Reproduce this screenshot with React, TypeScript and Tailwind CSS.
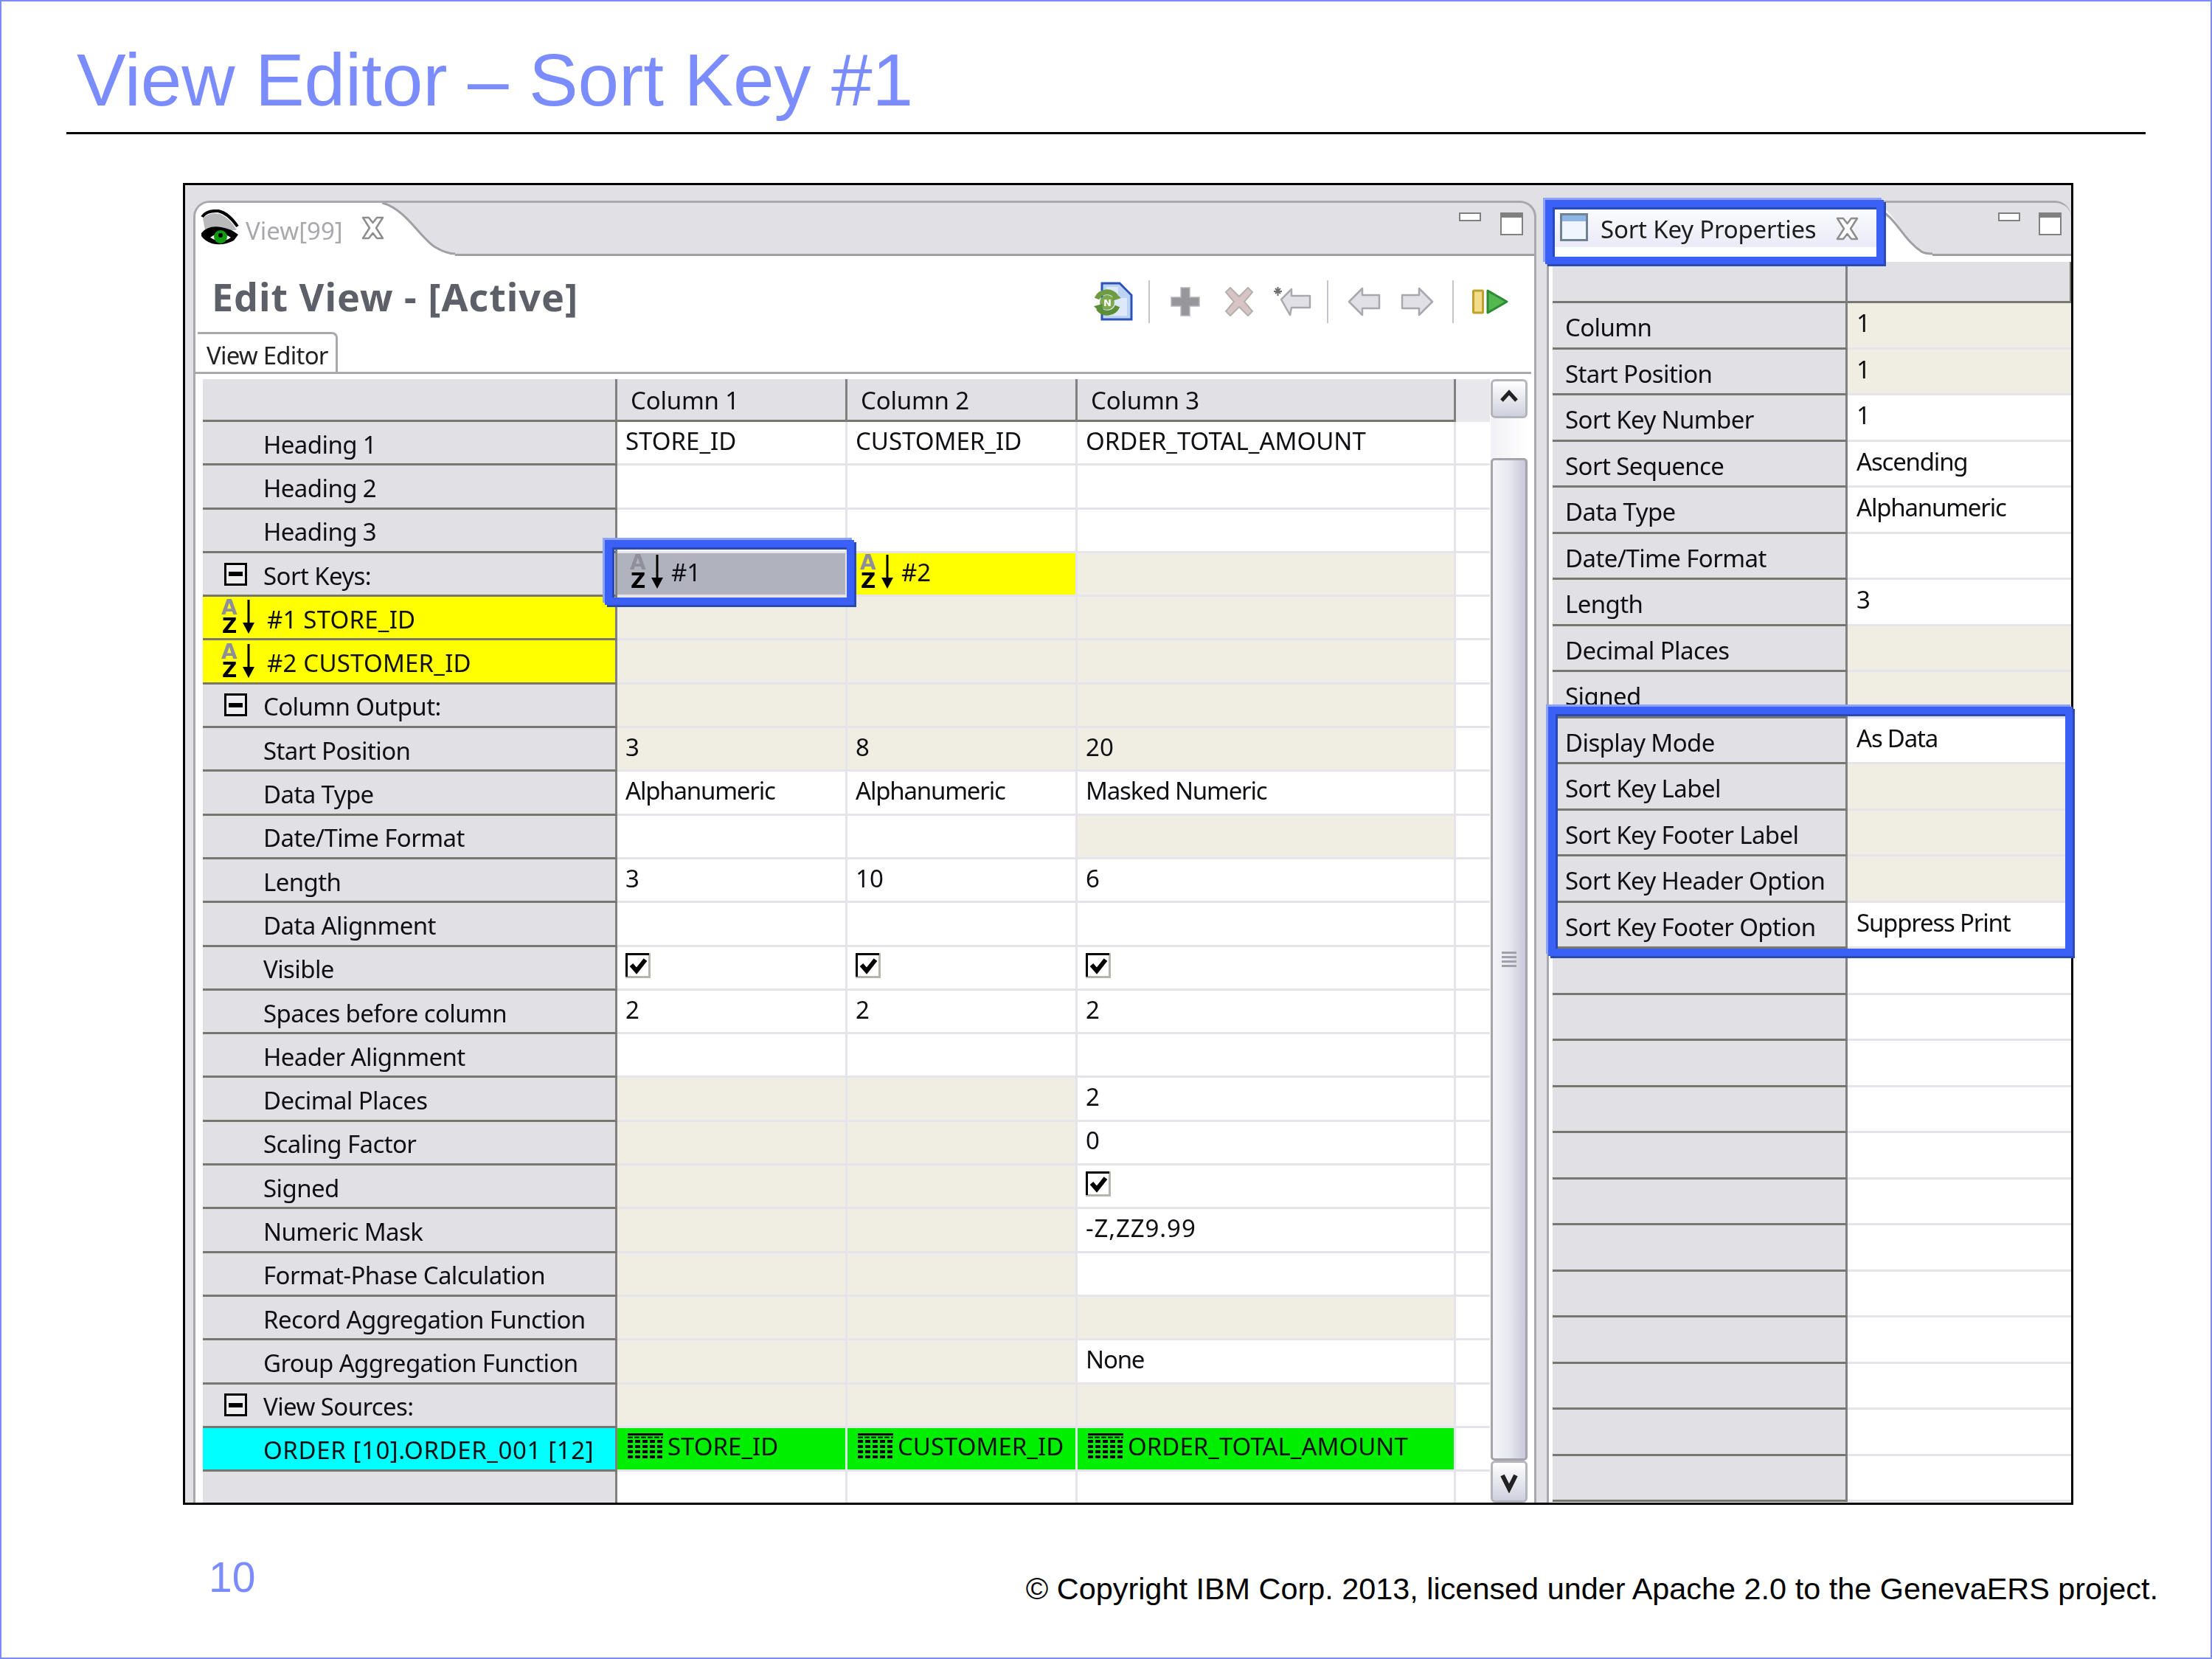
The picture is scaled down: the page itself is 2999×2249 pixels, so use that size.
import { ReactNode } from "react";

type CellKind = "white" | "beige" | "yellow" | "selected" | "green";

interface CellData {
  kind: CellKind;
  text?: string;
  check?: boolean;
  sortIcon?: boolean;
  tableIcon?: boolean;
}

interface RowData {
  label: string;
  labelKind?: "plain" | "toggle" | "yellow" | "cyan";
  cells: CellData[];
}

const w = (text?: string): CellData => ({ kind: "white", text });
const b = (text?: string): CellData => ({ kind: "beige", text });
const chk = (): CellData => ({ kind: "white", check: true });
const grn = (text: string): CellData => ({ kind: "green", text, tableIcon: true });

const LEFT_ROWS: RowData[] = [
  { label: "Heading 1", cells: [w("STORE_ID"), w("CUSTOMER_ID"), w("ORDER_TOTAL_AMOUNT")] },
  { label: "Heading 2", cells: [w(), w(), w()] },
  { label: "Heading 3", cells: [w(), w(), w()] },
  {
    label: "Sort Keys:",
    labelKind: "toggle",
    cells: [
      { kind: "selected", text: "#1", sortIcon: true },
      { kind: "yellow", text: "#2", sortIcon: true },
      b(),
    ],
  },
  { label: "#1 STORE_ID", labelKind: "yellow", cells: [b(), b(), b()] },
  { label: "#2 CUSTOMER_ID", labelKind: "yellow", cells: [b(), b(), b()] },
  { label: "Column Output:", labelKind: "toggle", cells: [b(), b(), b()] },
  { label: "Start Position", cells: [b("3"), b("8"), b("20")] },
  { label: "Data Type", cells: [w("Alphanumeric"), w("Alphanumeric"), w("Masked Numeric")] },
  { label: "Date/Time Format", cells: [w(), w(), b()] },
  { label: "Length", cells: [w("3"), w("10"), w("6")] },
  { label: "Data Alignment", cells: [w(), w(), w()] },
  { label: "Visible", cells: [chk(), chk(), chk()] },
  { label: "Spaces before column", cells: [w("2"), w("2"), w("2")] },
  { label: "Header Alignment", cells: [w(), w(), w()] },
  { label: "Decimal Places", cells: [b(), b(), w("2")] },
  { label: "Scaling Factor", cells: [b(), b(), w("0")] },
  { label: "Signed", cells: [b(), b(), chk()] },
  { label: "Numeric Mask", cells: [b(), b(), w("-Z,ZZ9.99")] },
  { label: "Format-Phase Calculation", cells: [b(), b(), w()] },
  { label: "Record Aggregation Function", cells: [b(), b(), b()] },
  { label: "Group Aggregation Function", cells: [b(), b(), w("None")] },
  { label: "View Sources:", labelKind: "toggle", cells: [b(), b(), b()] },
  {
    label: "ORDER [10].ORDER_001 [12]",
    labelKind: "cyan",
    cells: [grn("STORE_ID"), grn("CUSTOMER_ID"), grn("ORDER_TOTAL_AMOUNT")],
  },
  { label: "", cells: [w(), w(), w()] },
];

const RIGHT_ROWS: [string, string, boolean][] = [
  ["Column", "1", true],
  ["Start Position", "1", true],
  ["Sort Key Number", "1", false],
  ["Sort Sequence", "Ascending", false],
  ["Data Type", "Alphanumeric", false],
  ["Date/Time Format", "", false],
  ["Length", "3", false],
  ["Decimal Places", "", true],
  ["Signed", "", true],
  ["Display Mode", "As Data", false],
  ["Sort Key Label", "", true],
  ["Sort Key Footer Label", "", true],
  ["Sort Key Header Option", "", true],
  ["Sort Key Footer Option", "Suppress Print", false],
  ["", "", false],
  ["", "", false],
  ["", "", false],
  ["", "", false],
  ["", "", false],
  ["", "", false],
  ["", "", false],
  ["", "", false],
  ["", "", false],
  ["", "", false],
  ["", "", false],
  ["", "", false],
];

const CELL_BG: Record<CellKind, string> = {
  white: "bg-white",
  beige: "bg-[#f0eee2]",
  yellow: "bg-[#ffff00]",
  selected: "bg-[#b0b2bd]",
  green: "bg-[#00ef00]",
};

// Tahoma runs narrower than Noto Sans in lower case and wider in digits
function valueTracking(text?: string) {
  if (!text) return "";
  if (text.includes(",")) return "tracking-[0.9px]";
  return /[a-z]/.test(text) ? "tracking-[-1.2px]" : "";
}

function SortIcon() {
  return (
    <svg width="46" height="48" viewBox="0 0 46 48" className="shrink-0 overflow-visible">
      <text x="0" y="21" fontFamily="DejaVu Sans" fontWeight="700" fontSize="28" fill="#8f8f9c">A</text>
      <text x="1" y="46" fontFamily="DejaVu Sans" fontWeight="700" fontSize="28" fill="#000">Z</text>
      <path d="M37 1V36" stroke="#000" strokeWidth="3" />
      <path d="M29 32H45L37 47Z" fill="#000" />
    </svg>
  );
}

function TableIcon() {
  const rows = [9, 16, 23, 30];
  const cols = [0, 10, 20, 30, 40];
  return (
    <svg width="48" height="35" viewBox="0 0 48 35" className="shrink-0">
      <path d="M0 1.5H48" stroke="#000" strokeWidth="3" />
      <path d="M0 5.5H48" stroke="#000" strokeWidth="2" strokeDasharray="7 2" />
      {rows.map((y) =>
        cols.map((x) => <rect key={`${x}-${y}`} x={x} y={y} width="7" height="4" fill="#000" />)
      )}
    </svg>
  );
}

function CheckBox() {
  return (
    <svg width="34" height="34" viewBox="0 0 34 34">
      <rect x="1.5" y="1.5" width="31" height="31" fill="#fff" stroke="#b4b4ac" strokeWidth="3" />
      <path d="M1.5 32V1.5H32" fill="none" stroke="#000" strokeWidth="3" />
      <path d="M8 16L15 24L27 9" fill="none" stroke="#000" strokeWidth="6" />
    </svg>
  );
}

function Toggle() {
  return (
    <span className="flex h-[31px] w-[31px] shrink-0 items-center justify-center border-[3px] border-black bg-[#eeeef0]">
      <span className="h-[6px] w-[19px] bg-black" />
    </span>
  );
}

function CloseIcon() {
  return (
    <svg width="33" height="32" viewBox="0 0 33 32" className="shrink-0">
      <path
        d="M3 2H11L16.5 9L22 2H30L21 16L30 30H22L16.5 23L11 30H3L12 16Z"
        fill="#fff"
        stroke="#8d8d8d"
        strokeWidth="2.5"
        strokeLinejoin="round"
      />
    </svg>
  );
}

function MinMax({ gap }: { gap: string }) {
  return (
    <div className={`flex items-start ${gap}`}>
      <span className="h-[12px] w-[30px] border-[2.5px] border-[#808080] bg-white" />
      <span className="h-[31px] w-[31px] border-[2.5px] border-t-[7px] border-[#808080] bg-white" />
    </div>
  );
}

function EyeIcon() {
  return (
    <svg width="52" height="50" viewBox="0 0 52 50" className="shrink-0">
      <path d="M3 12Q12 3 26 6Q40 12 49 28L6 28Z" fill="#b9b9bb" />
      <path d="M2 10Q8 1 24 2Q38 5 50 23" fill="none" stroke="#000" strokeWidth="4" />
      <path d="M1 32Q10 21 28 24Q41 26 51 34L45 42Q30 50 15 46Q5 42 1 36Z" fill="#000" />
      <path d="M13 38Q26 28 41 38Q28 47 13 38Z" fill="#fff" />
      <circle cx="27" cy="37" r="9" fill="#129a12" />
      <circle cx="27" cy="35" r="3" fill="#000" />
    </svg>
  );
}

function DocIcon() {
  return (
    <svg width="54" height="53" viewBox="0 0 54 53" className="shrink-0">
      <path d="M12 2H36L52 18V51H12Z" fill="#bcd3f2" stroke="#2b52b8" strokeWidth="3" />
      <path d="M18 7H34V22H46V46H18Z" fill="#dde9f9" />
      <circle cx="19" cy="28" r="10" fill="#7fa94f" />
      <path d="M5 23A15 15 0 0 1 31 20" fill="none" stroke="#6f9c3f" strokeWidth="7" />
      <path d="M33 33A15 15 0 0 1 7 36" fill="none" stroke="#5b8f35" strokeWidth="7" />
      <path d="M27 13L38 22L26 26Z" fill="#6f9c3f" />
      <path d="M12 44L1 33L13 30Z" fill="#5b8f35" />
      <text x="14" y="33" fontFamily="DejaVu Sans" fontWeight="700" fontSize="13" fill="#fff">N</text>
    </svg>
  );
}

function Separator({ ml }: { ml: string }) {
  return <span className={`h-[58px] w-[2px] shrink-0 bg-[#c4c4cc] ${ml}`} />;
}

function Toolbar() {
  return (
    <div className="mt-[20px] flex items-center">
      <DocIcon />
      <Separator ml="ml-[21px]" />
      <svg width="40" height="40" viewBox="0 0 40 40" className="ml-[28px] shrink-0">
        <path d="M14 1H26V14H39V26H26V39H14V26H1V14H14Z" fill="#97979b" stroke="#b8b8bc" strokeWidth="1.5" />
      </svg>
      <svg width="40" height="40" viewBox="0 0 40 40" className="ml-[33px] shrink-0">
        <path d="M2 7L8 1L20 13L32 1L38 7L27 20L38 33L32 39L20 27L8 39L2 33L13 20Z" fill="#d9c4c4" stroke="#b4b0b0" strokeWidth="2" />
      </svg>
      <svg width="53" height="40" viewBox="0 0 53 40" className="ml-[25px] shrink-0">
        <path d="M4 2L11 9M11 2L4 9M2 6H13M7.5 0V12" stroke="#6e6e72" strokeWidth="2" />
        <path d="M12 17L26 3V12H51V28H26L24 38Z" fill="#e0e0e6" stroke="#a8a8ae" strokeWidth="2.5" strokeLinejoin="round" />
      </svg>
      <Separator ml="ml-[21px]" />
      <svg width="45" height="40" viewBox="0 0 45 40" className="ml-[26px] shrink-0">
        <path d="M2 20L20 2V11H43V29H20V38Z" fill="#e0e0e6" stroke="#a8a8ae" strokeWidth="2.5" strokeLinejoin="round" />
      </svg>
      <svg width="45" height="40" viewBox="0 0 45 40" className="ml-[27px] shrink-0">
        <path d="M43 20L25 2V11H2V29H25V38Z" fill="#e0e0e6" stroke="#a8a8ae" strokeWidth="2.5" strokeLinejoin="round" />
      </svg>
      <Separator ml="ml-[25px]" />
      <svg width="49" height="34" viewBox="0 0 49 34" className="ml-[25px] shrink-0">
        <rect x="1.5" y="2" width="13" height="30" rx="1" fill="#f2dc8a" stroke="#bfa12f" strokeWidth="3" />
        <path d="M21 2L47 17L21 32Z" fill="#52b84f" stroke="#2e8a35" strokeWidth="3" strokeLinejoin="round" />
      </svg>
    </div>
  );
}

function GridCell({ cell, last }: { cell: CellData; last?: boolean }) {
  return (
    <div
      className={`flex items-center gap-[6px] overflow-hidden border-b-[3px] border-[#e4e4ea] pb-[6px] whitespace-nowrap ${CELL_BG[cell.kind]} ${last ? "" : "border-r-[3px]"} ${cell.sortIcon ? "pl-[17px] gap-[10px]" : cell.tableIcon ? "pl-[14px]" : "pl-[11px]"} ${valueTracking(cell.text)}`}
    >
      {cell.sortIcon && <SortIcon />}
      {cell.tableIcon && <TableIcon />}
      {cell.check && <CheckBox />}
      {cell.text}
    </div>
  );
}

function LabelCell({ row }: { row: RowData }) {
  const kind = row.labelKind ?? "plain";
  const bg = kind === "yellow" ? "bg-[#ffff00]" : kind === "cyan" ? "bg-[#00ffff]" : "bg-[#e0e0e5]";
  const tracking = kind === "yellow" ? "tracking-[0.2px]" : kind === "cyan" ? "tracking-[0.6px]" : "tracking-[-0.6px]";
  let inner: ReactNode = <span className="pl-[82px]">{row.label}</span>;
  if (kind === "toggle") {
    inner = (
      <>
        <span className="ml-[29px] mr-[22px] -mt-[4px]">
          <Toggle />
        </span>
        {row.label}
      </>
    );
  }
  if (kind === "yellow") {
    inner = (
      <>
        <span className="ml-[25px] mr-[16px] -mt-[6px]">
          <SortIcon />
        </span>
        {row.label}
      </>
    );
  }
  return (
    <div className={`flex items-center overflow-hidden border-b-[3px] border-r-[3px] border-b-[#77776f] border-r-[#808080] pt-[4px] whitespace-nowrap ${bg} ${tracking}`}>
      {inner}
    </div>
  );
}

function ColumnHeader({ text }: { text: string }) {
  return (
    <div className="flex items-center border-b-[3px] border-r-[3px] border-b-[#77776f] border-r-[#808080] bg-[#e0e0e5] pl-[18px] pt-[2px] tracking-[-0.2px]">
      {text}
    </div>
  );
}

function EditorGrid() {
  return (
    <div className="flex-1 overflow-hidden">
      <div className="grid h-[58px] grid-cols-[562px_312px_312px_513px_46px]">
        <ColumnHeader text="" />
        <ColumnHeader text="Column 1" />
        <ColumnHeader text="Column 2" />
        <ColumnHeader text="Column 3" />
        <div className="bg-[#e8e8ec]" />
      </div>
      {LEFT_ROWS.map((row, i) => (
        <div key={i} className="grid h-[59.3px] grid-cols-[562px_312px_312px_513px_46px] bg-white">
          <LabelCell row={row} />
          {row.cells.map((cell, j) => (
            <GridCell key={j} cell={cell} />
          ))}
          <GridCell cell={{ kind: "white" }} last />
        </div>
      ))}
    </div>
  );
}

function ScrollBar() {
  return (
    <div className="ml-[1px] flex w-[50px] flex-col">
      <div className="flex h-[53px] items-center justify-center rounded-[6px] border-[3px] border-[#b4b4bc] bg-gradient-to-b from-white to-[#cfd0de] pb-[8px]">
        <svg width="26" height="18" viewBox="0 0 26 18">
          <path d="M3 15L13 4L23 15" fill="none" stroke="#222" strokeWidth="5" />
        </svg>
      </div>
      <div className="h-[54px] bg-gradient-to-r from-[#f1f1f6] to-white" />
      <div className="flex flex-1 items-center justify-center rounded-[5px] border-[3px] border-[#a4a4aa] bg-gradient-to-r from-[#f4f4f9] via-[#e8e8f0] to-[#c8c8da]">
        <div className="flex w-[20px] flex-col gap-[3px]">
          <span className="h-[3px] bg-[#a0a0a8]" />
          <span className="h-[3px] bg-[#a0a0a8]" />
          <span className="h-[3px] bg-[#a0a0a8]" />
          <span className="h-[3px] bg-[#a0a0a8]" />
        </div>
      </div>
      <div className="flex h-[57px] shrink-0 items-center justify-center rounded-[6px] border-[3px] border-[#b4b4bc] bg-gradient-to-b from-white to-[#cfd0de]">
        <svg width="26" height="30" viewBox="0 0 26 30">
          <path d="M4 6L13 24L22 6" fill="none" stroke="#222" strokeWidth="6" />
        </svg>
      </div>
    </div>
  );
}

function EditorPanel() {
  return (
    <section className="flex h-full w-[1821px] shrink-0 flex-col overflow-hidden rounded-t-[22px] border-x-[3px] border-t-[3px] border-[#a8a8ae]">
      {/* tab strip */}
      <div className="relative h-[72px] shrink-0 border-b-[3px] border-[#a0a0a4]">
        <svg width="352" height="72" viewBox="0 0 352 72" className="absolute left-0 top-0">
          <path d="M0 72V0H253C285 8 305 48 325 60C335 66 345 69 352 69V72Z" fill="#fff" />
          <path d="M253 0C285 8 305 48 325 60C335 66 345 69 352 69" fill="none" stroke="#a0a0a4" strokeWidth="3" />
        </svg>
        <div className="relative flex items-center pl-[7px] pt-[9px]">
          <EyeIcon />
          <span className="ml-[9px] mt-[6px] text-[#a9a9ad]">View[99]</span>
          <span className="ml-[24px]">
            <CloseIcon />
          </span>
        </div>
        <div className="absolute right-[15px] top-[13px]">
          <MinMax gap="gap-[26px]" />
        </div>
      </div>

      <div className="flex min-h-0 flex-1 flex-col bg-white">
        <div className="flex h-[103px] shrink-0 items-center justify-between pl-[22px] pr-[35px]">
          <h2 className="mt-[6px] text-[52px] font-bold tracking-[1px] text-[#5d6069]">Edit View - [Active]</h2>
          <Toolbar />
        </div>
        <div className="mr-[4px] flex h-[57px] shrink-0 items-end border-b-[3px] border-[#a8a8ae] pl-[3px]">
          <div className="flex h-[54px] w-[190px] items-center rounded-tr-[8px] border-r-[3px] border-t-[3px] border-[#a8a8ae] bg-white pl-[12px] pt-[6px] tracking-[-0.8px] text-[#222]">
            View Editor
          </div>
        </div>
        <div className="mt-[7px] flex min-h-0 flex-1 pl-[10px] pr-[9px]">
          <EditorGrid />
          <ScrollBar />
        </div>
      </div>
    </section>
  );
}

function PropertiesPanel() {
  return (
    <section className="ml-[14px] flex h-full min-w-0 flex-1 flex-col overflow-hidden rounded-tr-[22px] border-l-[3px] border-t-[3px] border-[#a8a8ae]">
      <div className="relative h-[72px] shrink-0 border-b-[3px] border-[#a0a0a4]">
        <svg width="520" height="72" viewBox="0 0 520 72" className="absolute left-0 top-0">
          <path d="M0 72V0H445C470 14 480 50 505 66C510 69 515 69 520 69V72Z" fill="#fff" />
          <path d="M445 8C470 18 480 50 505 66C510 69 515 69 520 69" fill="none" stroke="#a0a0a4" strokeWidth="3" />
        </svg>
        <div className="relative flex h-[60px] w-[446px] items-center bg-gradient-to-b from-white to-[#e8eaf6] pl-[15px]">
          <svg width="38" height="38" viewBox="0 0 38 38" className="mt-[6px] shrink-0">
            <rect x="1.5" y="1.5" width="35" height="35" fill="#f0f6fd" stroke="#6f8296" strokeWidth="3" />
            <rect x="3" y="3" width="32" height="8" fill="#8fb4e6" />
          </svg>
          <span className="ml-[17px] mt-[10px] tracking-[-0.2px] text-[#1c1c1c]">Sort Key Properties</span>
          <span className="ml-[26px] mt-[10px]">
            <CloseIcon />
          </span>
        </div>
        <div className="absolute right-[13px] top-[13px]">
          <MinMax gap="gap-[25px]" />
        </div>
      </div>

      <div className="min-h-0 flex-1 overflow-hidden bg-white pl-[5px]">
        <div className="mt-[8px] grid h-[56px] grid-cols-[400px_304px] bg-[#e0e0e5]">
          <div className="border-b-[3px] border-r-[3px] border-b-[#77776f] border-r-[#808080]" />
          <div className="border-b-[3px] border-r-[3px] border-b-[#77776f] border-r-[#77776f]" />
        </div>
        {RIGHT_ROWS.map(([label, value, beige], i) => (
          <div key={i} className="grid h-[62.5px] grid-cols-[400px_304px]">
            <div className="flex items-center border-b-[3px] border-r-[3px] border-b-[#77776f] border-r-[#808080] bg-[#e0e0e5] pl-[17px] pt-[6px] tracking-[-0.6px] whitespace-nowrap">
              {label}
            </div>
            <div
              className={`flex items-center border-b-[3px] border-[#e4e4ea] pb-[6px] pl-[12px] whitespace-nowrap ${beige ? "bg-[#f0eee2]" : "bg-white"} ${valueTracking(value)}`}
            >
              {value}
            </div>
          </div>
        ))}
      </div>
    </section>
  );
}

// blue call-out frames drawn on top of the screenshot
function Callout({ className }: { className: string }) {
  return (
    <div
      className={`pointer-events-none absolute border-[10px] border-[#3a60f5] shadow-[-3px_-3px_0_#8ea3fb,3px_3px_0_#2a49b8,inset_3px_3px_0_#2a49b8] ${className}`}
    />
  );
}

export default function App() {
  return (
    <div className="flex h-[2249px] w-[2999px] flex-col overflow-hidden border-2 border-[#7b8cff] bg-white font-['Liberation_Sans',Arial,sans-serif] text-black">
      <h1 className="ml-[102px] mt-[56px] text-[100px] leading-none tracking-[-0.15px] text-[#7b8cff]">View Editor – Sort Key #1</h1>
      <div className="ml-[88px] mt-[21px] h-[3px] w-[2819px] bg-black" />

      <div className="relative ml-[246px] mt-[66px] flex h-[1792px] w-[2563px] shrink-0 border-[3px] border-black bg-[#e0e0e5] pl-[11px] pt-[21px] font-['Noto_Sans',sans-serif] text-[33px] leading-none text-[#101014] blur-[0.5px]">
        <EditorPanel />
        <PropertiesPanel />
        <Callout className="left-[569px] top-[481px] h-[88px] w-[338px]" />
        <Callout className="left-[1844px] top-[20px] h-[87px] w-[459px]" />
        <Callout className="left-[1848px] top-[707px] h-[338px] w-[711px]" />
      </div>

      <footer className="flex items-start justify-between pl-[281px] pr-[71px]">
        <span className="mt-[70px] text-[57px] leading-none text-[#7b8cff]">10</span>
        <span className="mt-[94px] text-[41.4px] leading-none">© Copyright IBM Corp. 2013, licensed under Apache 2.0 to the GenevaERS project.</span>
      </footer>
    </div>
  );
}
